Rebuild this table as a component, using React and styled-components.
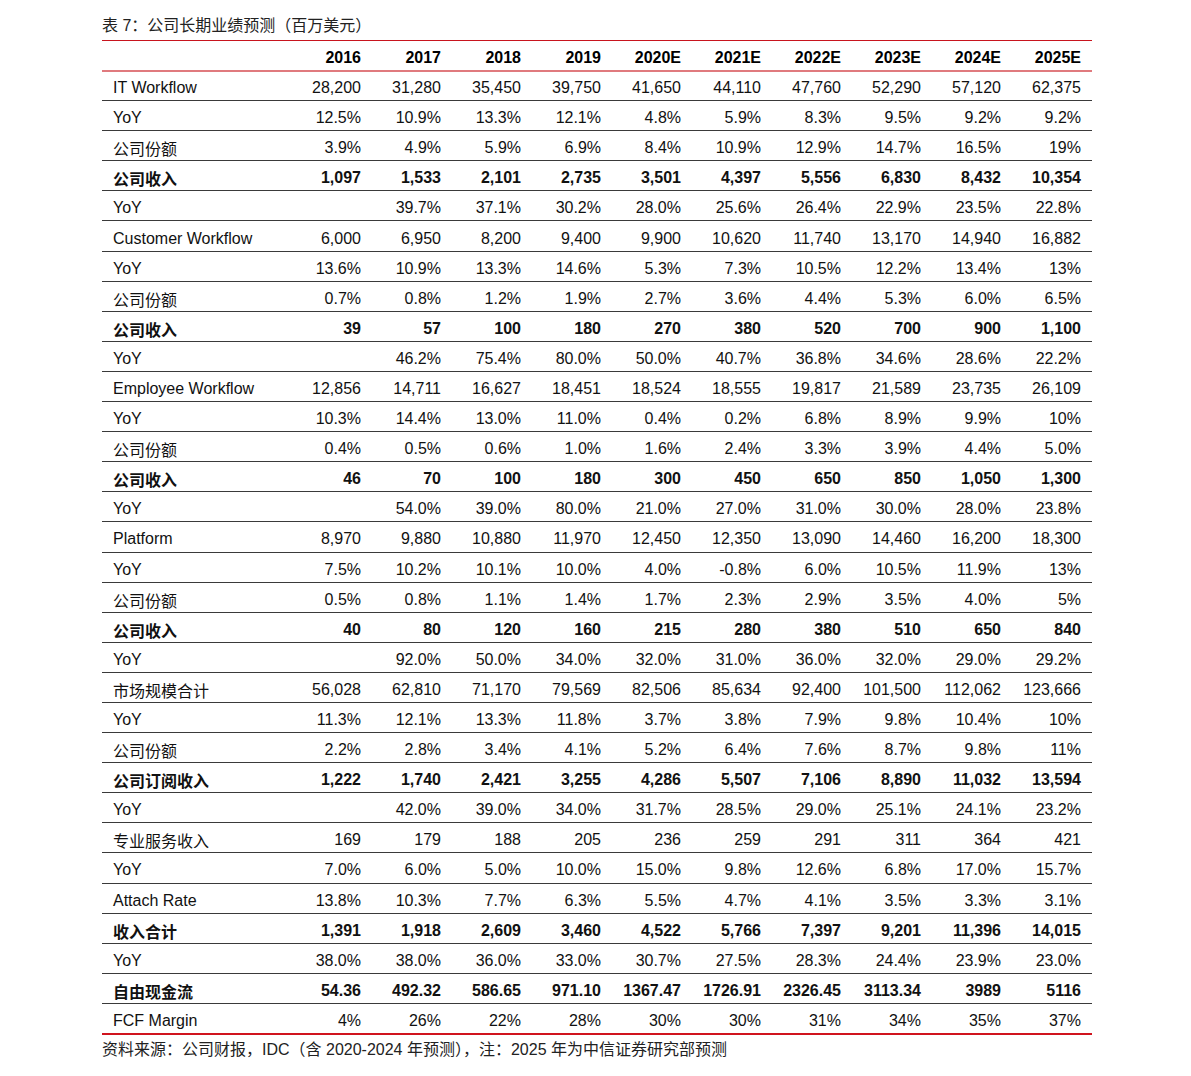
import React from 'react';
import styled, { createGlobalStyle } from 'styled-components';

const GlobalStyle = createGlobalStyle`
  body {
    margin: 0;
    background: #fff;
    font-family: "Liberation Sans", "Noto Sans CJK SC", Arial, sans-serif;
    color: #111;
  }
`;

const years = ['2016', '2017', '2018', '2019', '2020E', '2021E', '2022E', '2023E', '2024E', '2025E'];

const rows = [
  { label: 'IT Workflow', values: ['28,200', '31,280', '35,450', '39,750', '41,650', '44,110', '47,760', '52,290', '57,120', '62,375'] },
  { label: 'YoY', values: ['12.5%', '10.9%', '13.3%', '12.1%', '4.8%', '5.9%', '8.3%', '9.5%', '9.2%', '9.2%'] },
  { label: '公司份额', values: ['3.9%', '4.9%', '5.9%', '6.9%', '8.4%', '10.9%', '12.9%', '14.7%', '16.5%', '19%'] },
  { label: '公司收入', bold: true, values: ['1,097', '1,533', '2,101', '2,735', '3,501', '4,397', '5,556', '6,830', '8,432', '10,354'] },
  { label: 'YoY', values: ['', '39.7%', '37.1%', '30.2%', '28.0%', '25.6%', '26.4%', '22.9%', '23.5%', '22.8%'] },
  { label: 'Customer Workflow', values: ['6,000', '6,950', '8,200', '9,400', '9,900', '10,620', '11,740', '13,170', '14,940', '16,882'] },
  { label: 'YoY', values: ['13.6%', '10.9%', '13.3%', '14.6%', '5.3%', '7.3%', '10.5%', '12.2%', '13.4%', '13%'] },
  { label: '公司份额', values: ['0.7%', '0.8%', '1.2%', '1.9%', '2.7%', '3.6%', '4.4%', '5.3%', '6.0%', '6.5%'] },
  { label: '公司收入', bold: true, values: ['39', '57', '100', '180', '270', '380', '520', '700', '900', '1,100'] },
  { label: 'YoY', values: ['', '46.2%', '75.4%', '80.0%', '50.0%', '40.7%', '36.8%', '34.6%', '28.6%', '22.2%'] },
  { label: 'Employee Workflow', values: ['12,856', '14,711', '16,627', '18,451', '18,524', '18,555', '19,817', '21,589', '23,735', '26,109'] },
  { label: 'YoY', values: ['10.3%', '14.4%', '13.0%', '11.0%', '0.4%', '0.2%', '6.8%', '8.9%', '9.9%', '10%'] },
  { label: '公司份额', values: ['0.4%', '0.5%', '0.6%', '1.0%', '1.6%', '2.4%', '3.3%', '3.9%', '4.4%', '5.0%'] },
  { label: '公司收入', bold: true, values: ['46', '70', '100', '180', '300', '450', '650', '850', '1,050', '1,300'] },
  { label: 'YoY', values: ['', '54.0%', '39.0%', '80.0%', '21.0%', '27.0%', '31.0%', '30.0%', '28.0%', '23.8%'] },
  { label: 'Platform', values: ['8,970', '9,880', '10,880', '11,970', '12,450', '12,350', '13,090', '14,460', '16,200', '18,300'] },
  { label: 'YoY', values: ['7.5%', '10.2%', '10.1%', '10.0%', '4.0%', '-0.8%', '6.0%', '10.5%', '11.9%', '13%'] },
  { label: '公司份额', values: ['0.5%', '0.8%', '1.1%', '1.4%', '1.7%', '2.3%', '2.9%', '3.5%', '4.0%', '5%'] },
  { label: '公司收入', bold: true, values: ['40', '80', '120', '160', '215', '280', '380', '510', '650', '840'] },
  { label: 'YoY', values: ['', '92.0%', '50.0%', '34.0%', '32.0%', '31.0%', '36.0%', '32.0%', '29.0%', '29.2%'] },
  { label: '市场规模合计', values: ['56,028', '62,810', '71,170', '79,569', '82,506', '85,634', '92,400', '101,500', '112,062', '123,666'] },
  { label: 'YoY', values: ['11.3%', '12.1%', '13.3%', '11.8%', '3.7%', '3.8%', '7.9%', '9.8%', '10.4%', '10%'] },
  { label: '公司份额', values: ['2.2%', '2.8%', '3.4%', '4.1%', '5.2%', '6.4%', '7.6%', '8.7%', '9.8%', '11%'] },
  { label: '公司订阅收入', bold: true, values: ['1,222', '1,740', '2,421', '3,255', '4,286', '5,507', '7,106', '8,890', '11,032', '13,594'] },
  { label: 'YoY', values: ['', '42.0%', '39.0%', '34.0%', '31.7%', '28.5%', '29.0%', '25.1%', '24.1%', '23.2%'] },
  { label: '专业服务收入', values: ['169', '179', '188', '205', '236', '259', '291', '311', '364', '421'] },
  { label: 'YoY', values: ['7.0%', '6.0%', '5.0%', '10.0%', '15.0%', '9.8%', '12.6%', '6.8%', '17.0%', '15.7%'] },
  { label: 'Attach Rate', values: ['13.8%', '10.3%', '7.7%', '6.3%', '5.5%', '4.7%', '4.1%', '3.5%', '3.3%', '3.1%'] },
  { label: '收入合计', bold: true, values: ['1,391', '1,918', '2,609', '3,460', '4,522', '5,766', '7,397', '9,201', '11,396', '14,015'] },
  { label: 'YoY', values: ['38.0%', '38.0%', '36.0%', '33.0%', '30.7%', '27.5%', '28.3%', '24.4%', '23.9%', '23.0%'] },
  { label: '自由现金流', bold: true, values: ['54.36', '492.32', '586.65', '971.10', '1367.47', '1726.91', '2326.45', '3113.34', '3989', '5116'] },
  { label: 'FCF Margin', values: ['4%', '26%', '22%', '28%', '30%', '30%', '31%', '34%', '35%', '37%'] },
];

const App = () => (
  <>
    <GlobalStyle />
    <Page>
      <Caption>表 7：公司长期业绩预测（百万美元）</Caption>
      <Table>
        <colgroup>
          <col style={{ width: 190 }} />
          {years.map(y => <col key={y} style={{ width: 80 }} />)}
        </colgroup>
        <thead>
          <HeadRow>
            <HeadCell />
            {years.map(y => <HeadCell key={y}>{y}</HeadCell>)}
          </HeadRow>
        </thead>
        <tbody>
          {rows.map((row, i) => (
            <Row key={i} $bold={row.bold}>
              <LabelCell>{row.label}</LabelCell>
              {row.values.map((v, j) => <Cell key={j}>{v}</Cell>)}
            </Row>
          ))}
        </tbody>
      </Table>
      <Source>资料来源：公司财报，IDC（含 2020-2024 年预测），注：2025 年为中信证券研究部预测</Source>
    </Page>
  </>
);

const Page = styled.div`
  width: 990px;
  padding: 16px 0 0 102px;
`;

const Caption = styled.div`
  font-size: 16px;
  line-height: 20px;
  height: 24px;
  color: #222;
`;

const Table = styled.table`
  width: 990px;
  border-collapse: collapse;
  table-layout: fixed;
  border-top: 1px solid #c8141e;
  border-bottom: 2px solid #d0141e;
  font-size: 16px;
`;

const HeadRow = styled.tr`
  height: 30px;
  border-bottom: 2px solid #e07a7e;
`;

const HeadCell = styled.th`
  font-weight: bold;
  text-align: right;
  padding: 5px 11px 0 0;
  color: #000;
`;

const Row = styled.tr`
  height: 30.1px;
  border-bottom: 1px solid #3a3a3a;
  font-weight: ${p => (p.$bold ? 'bold' : 'normal')};

  &:last-child {
    border-bottom: 2px solid #d0141e;
  }
`;

const LabelCell = styled.td`
  padding: 5px 0 0 11px;
  text-align: left;
  white-space: nowrap;
`;

const Cell = styled.td`
  padding: 5px 11px 0 0;
  text-align: right;
  white-space: nowrap;
`;

const Source = styled.div`
  font-size: 16px;
  line-height: 20px;
  margin-top: 5px;
  color: #222;
`;

export default App;
